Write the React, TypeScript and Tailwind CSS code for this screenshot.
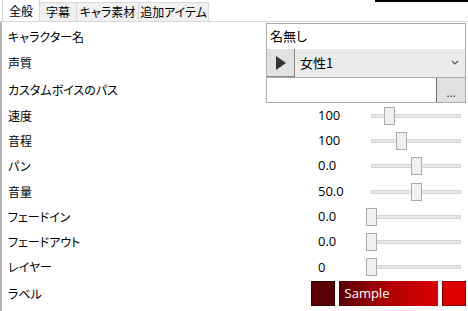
import React from 'react';

const font = {
  fontFamily: '"Noto Sans CJK JP", "Noto Sans", sans-serif',
  fontFeatureSettings: '"palt"',
};

function Slider({ pos }: { pos: number }) {
  return (
    <div className="relative w-[96px] h-[18px] flex items-center">
      <div className="ml-[5px] w-[90px] h-[4px] bg-[#e7e7e7] border border-[#d6d6d6]" />
      <div
        className="absolute top-0 w-[11px] h-[18px] bg-[#f0f0f0] border border-[#acacac]"
        style={{ left: pos }}
      />
    </div>
  );
}

const sliders = [
  { label: '速度', value: '100', pos: 18 },
  { label: '音程', value: '100', pos: 30 },
  { label: 'パン', value: '0.0', pos: 45 },
  { label: '音量', value: '50.0', pos: 45 },
  { label: 'フェードイン', value: '0.0', pos: 0 },
  { label: 'フェードアウト', value: '0.0', pos: 0 },
  { label: 'レイヤー', value: '0', pos: 0 },
];

export default function App() {
  return (
    <div className="w-[468px] h-[311px] bg-white text-[12px] text-black overflow-hidden" style={font}>
      <div className="flex h-[22px] items-end border-b border-[#d9d9d9]">
        <div className="h-[22px] w-[38px] ml-[2px] bg-white border border-b-0 border-[#d9d9d9] flex items-center justify-center">
          全般
        </div>
        <div className="h-[19px] w-[37px] bg-[#f0f0f0] border-t border-r border-[#d9d9d9] flex items-center justify-center">字幕</div>
        <div className="h-[19px] w-[62px] bg-[#f0f0f0] border-t border-r border-[#d9d9d9] flex items-center justify-center">キャラ素材</div>
        <div className="h-[19px] w-[70px] bg-[#f0f0f0] border-t border-r border-[#d9d9d9] flex items-center justify-center">追加アイテム</div>
        <div className="flex-1 self-start flex justify-end">
          <div className="w-[93px] h-[2px] bg-black" />
        </div>
      </div>
      <div className="border-l-2 border-[#b4b4b4] h-[289px] pr-[2px]">
        <div className="flex items-center h-[27px] pt-[1px]">
          <div className="w-[264px] pl-[6px] pt-[2px]">キャラクター名</div>
          <div className="w-[200px] h-[27px] border border-[#acacac] px-[3px] flex items-center text-[13px]">名無し</div>
        </div>
        <div className="flex items-center h-[28px]">
          <div className="w-[264px] pl-[6px]">声質</div>
          <div className="w-[200px] h-[28px] border-x border-[#acacac] flex">
            <div className="w-[28px] h-full bg-[#e1e1e1] border-r border-[#8a8a8a] border-b flex items-center justify-center">
              <svg width="11" height="14" viewBox="0 0 11 14"><path d="M1 0 L11 7 L1 14 Z" fill="#333" /></svg>
            </div>
            <div className="flex-1 bg-[#ebebeb] flex items-center justify-between pl-[5px] pr-[6px] text-[13px]">
              <span>女性1</span>
              <svg width="8" height="6" viewBox="0 0 8 6"><path d="M1 1 L4 4 L7 1" stroke="#555" strokeWidth="1.2" fill="none" /></svg>
            </div>
          </div>
        </div>
        <div className="flex items-center h-[26px]">
          <div className="w-[264px] pl-[6px]">カスタムボイスのパス</div>
          <div className="w-[200px] h-[26px] border border-[#acacac] flex justify-end">
            <div className="w-[29px] h-full bg-[#e1e1e1] border-l border-[#707070] flex items-center justify-center text-[11px] leading-none pt-[4px] text-[#333]">
              ...
            </div>
          </div>
        </div>
        {sliders.map((s) => (
          <div key={s.label} className="flex items-center h-[25.3px]">
            <div className="w-[316px] pl-[6px]">{s.label}</div>
            <div className="w-[48px] text-[13px]" style={{ fontFamily: '"Open Sans", sans-serif' }}>{s.value}</div>
            <Slider pos={s.pos} />
          </div>
        ))}
        <div className="flex items-center h-[27px]">
          <div className="w-[310px] pl-[6px]">ラベル</div>
          <div className="w-[24px] h-[25px] bg-[#5c0008] border border-[#300]" />
          <div
            className="w-[100px] h-[25px] ml-[4px] flex items-center pl-[6px] text-white text-[13px] bg-gradient-to-r from-[#5a0008] via-[#b00000] to-[#d80000]"
            style={{ fontFamily: '"Open Sans", sans-serif' }}
          >
            Sample
          </div>
          <div className="w-[24px] h-[25px] ml-[4px] bg-[#dd0000] border border-[#800]" />
        </div>
      </div>
    </div>
  );
}
